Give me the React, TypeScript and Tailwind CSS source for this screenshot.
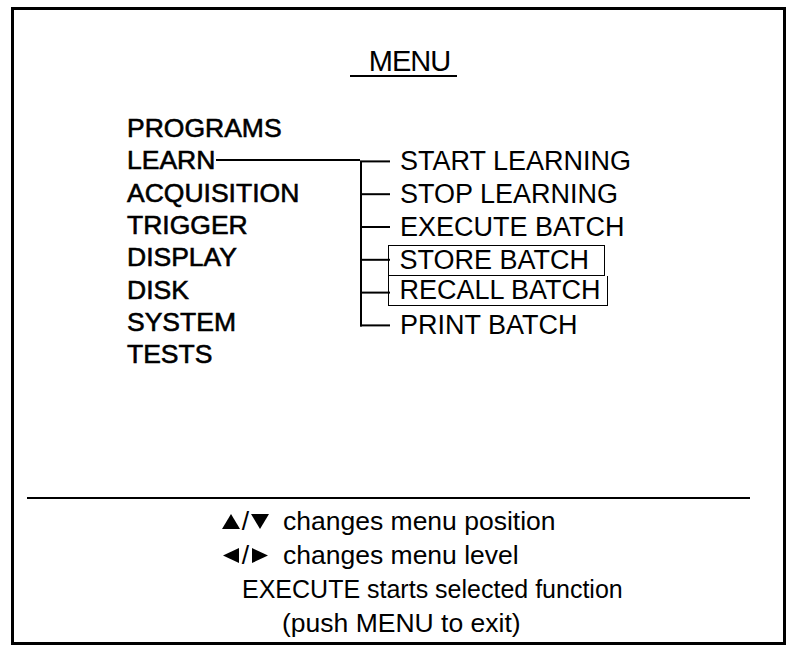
const FONT = { fontFamily: '"Liberation Sans", Arial, sans-serif' };

const MAIN_ITEMS = [
  "PROGRAMS",
  "LEARN",
  "ACQUISITION",
  "TRIGGER",
  "DISPLAY",
  "DISK",
  "SYSTEM",
  "TESTS",
];

type SubItem = {
  label: string;
  boxed?: "first" | "next";
};

const LEARN_ITEMS: SubItem[] = [
  { label: "START LEARNING" },
  { label: "STOP LEARNING" },
  { label: "EXECUTE BATCH" },
  { label: "STORE BATCH", boxed: "first" },
  { label: "RECALL BATCH", boxed: "next" },
  { label: "PRINT BATCH" },
];

// sub menu row pitch, the tree svg needs it too
const SUB_ROW = 32.8;

function Tri({ dir }: { dir: "up" | "down" | "left" | "right" }) {
  const points = {
    up: "9,0 18,15 0,15",
    down: "0,0 18,0 9,15",
    left: "17,0 17,15 1,7.5",
    right: "1,0 1,15 17,7.5",
  }[dir];

  return (
    <svg width="18" height="15" viewBox="0 0 18 15" className="block">
      <polygon points={points} fill="black" />
    </svg>
  );
}

function TreeLines() {
  const count = LEARN_ITEMS.length;
  const centers = LEARN_ITEMS.map((_, i) => i * SUB_ROW + SUB_ROW / 2);

  return (
    <svg width="30" height={count * SUB_ROW} className="shrink-0">
      <line
        x1="1"
        y1={centers[0]}
        x2="1"
        y2={centers[count - 1] + 1}
        stroke="black"
        strokeWidth="2"
      />
      {centers.map((y) => (
        <line key={y} x1="0" y1={y} x2="30" y2={y} stroke="black" strokeWidth="2" />
      ))}
    </svg>
  );
}

function KeyPair({ a, b }: { a: "up" | "left"; b: "down" | "right" }) {
  return (
    <span className="flex w-[61px] items-center">
      <Tri dir={a} />
      <span className="w-[11px] text-center">/</span>
      <Tri dir={b} />
    </span>
  );
}

export default function App() {
  return (
    <div className="min-h-[648px] bg-white pt-[7px] pl-[11px] text-black" style={FONT}>
      <div className="flex h-[638px] w-[775px] flex-col border-[3px] border-black">
        {/* title */}
        <div className="flex justify-center pt-[37px] pl-[10px]">
          <div className="w-[107px] border-b-2 border-black pb-0 pl-[12px] text-center text-[29px] leading-[28px] tracking-[-1px]">
            MENU
          </div>
        </div>

        {/* menu tree */}
        <div className="mt-[35px] flex pl-[113px]">
          <div className="w-[233px] text-[26.5px] [-webkit-text-stroke:0.6px_black]">
            {MAIN_ITEMS.map((item) => (
              <div key={item} className="flex h-[32.3px] items-center leading-[32px]">
                <span>{item}</span>
                {item === "LEARN" && <div className="ml-[1px] h-[2px] flex-1 bg-black" />}
              </div>
            ))}
          </div>

          <div className="mt-[32.7px] flex text-[27px]">
            <TreeLines />
            <div className="-ml-[2px]">
              {LEARN_ITEMS.map((item) => (
                <div
                  key={item.label}
                  className={`flex h-[32.8px] ${
                    item.boxed === "first" ? "items-end" : item.boxed === "next" ? "items-start" : "items-center"
                  }`}
                >
                  {item.boxed === "first" && (
                    <div className="flex h-[31px] w-[217px] items-center border-[1.5px] border-black pl-[10.5px] leading-[30px]">
                      {item.label}
                    </div>
                  )}
                  {item.boxed === "next" && (
                    <div className="flex h-[30px] w-[220px] items-center border-x-[1.5px] border-b-[1.5px] border-black pl-[10.5px] leading-[30px]">
                      {item.label}
                    </div>
                  )}
                  {!item.boxed && <div className="pl-[12px] leading-[32px]">{item.label}</div>}
                </div>
              ))}
            </div>
          </div>
        </div>

        {/* key help */}
        <div className="mt-[127px] ml-[13px] h-[2px] w-[723px] bg-black" />
        <div className="pt-[5px] text-[26.5px]">
          <div className="flex h-[34px] items-center pl-[208px]">
            <KeyPair a="up" b="down" />
            <span>changes menu position</span>
          </div>
          <div className="flex h-[34px] items-center pl-[208px]">
            <KeyPair a="left" b="right" />
            <span>changes menu level</span>
          </div>
          <div className="flex h-[34px] items-center pl-[228px] text-[25px]">EXECUTE starts selected function</div>
          <div className="flex h-[34px] items-center pl-[268px]">(push MENU to exit)</div>
        </div>
      </div>
    </div>
  );
}
